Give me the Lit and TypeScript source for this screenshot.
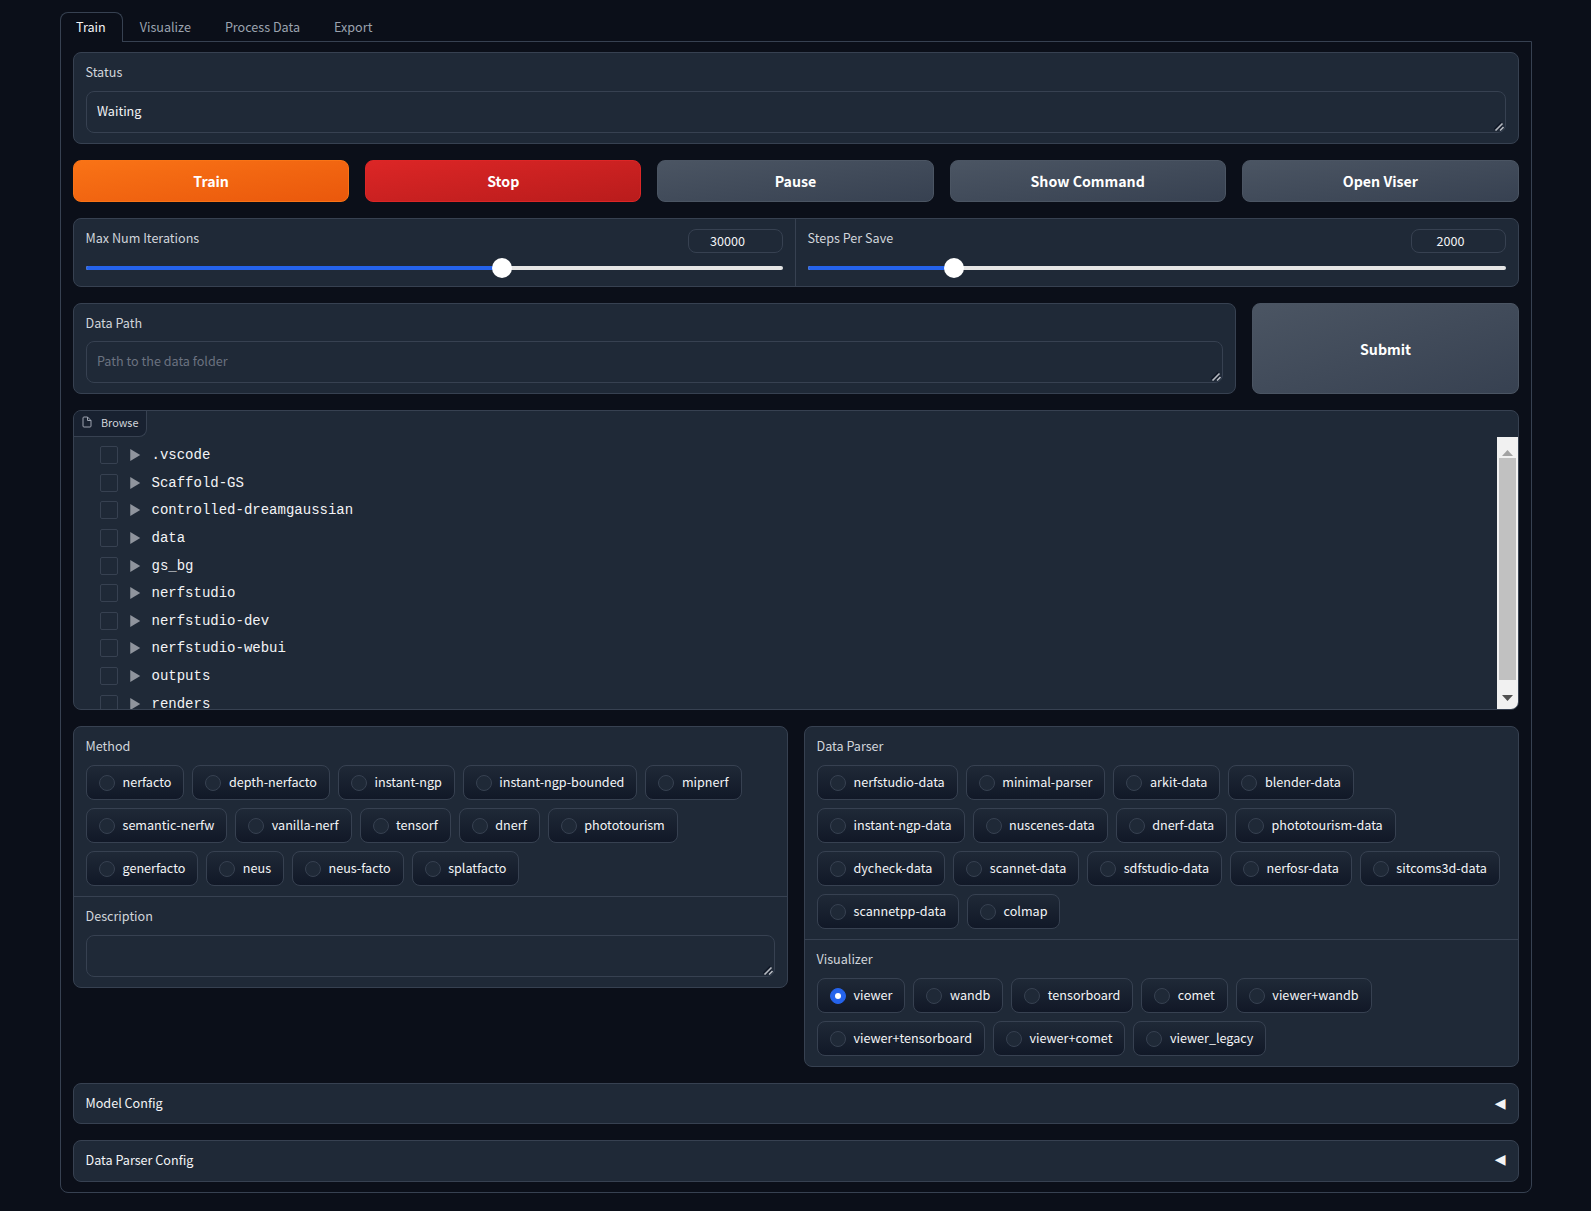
import { LitElement, html, css } from "lit";
import { customElement } from "lit/decorators.js";

const METHODS = ["nerfacto","depth-nerfacto","instant-ngp","instant-ngp-bounded","mipnerf","semantic-nerfw","vanilla-nerf","tensorf","dnerf","phototourism","generfacto","neus","neus-facto","splatfacto"];
const PARSERS = ["nerfstudio-data","minimal-parser","arkit-data","blender-data","instant-ngp-data","nuscenes-data","dnerf-data","phototourism-data","dycheck-data","scannet-data","sdfstudio-data","nerfosr-data","sitcoms3d-data","scannetpp-data","colmap"];
const VIS = ["viewer","wandb","tensorboard","comet","viewer+wandb","viewer+tensorboard","viewer+comet","viewer_legacy"];
const FILES = [".vscode","Scaffold-GS","controlled-dreamgaussian","data","gs_bg","nerfstudio","nerfstudio-dev","nerfstudio-webui","outputs","renders"];

@customElement("app-root")
export class AppRoot extends LitElement {
  static styles = css`
    :host { display:block; min-height:100vh; box-sizing:border-box; background:#0b0f19; padding:12px 59px 0 60px; font-family:"Noto Sans CJK SC","Noto Sans",sans-serif; font-size:12.6px; color:#f3f4f6; }
    * { box-sizing:border-box; }
    .tabs { display:flex; height:30px; }
    .tab { padding:0 16px; border:1px solid transparent; border-bottom:none; height:30px; line-height:28px; color:#9ca3af; }
    .tab.on { padding-left:15px; color:#f3f4f6; border-color:#374151; border-radius:8px 8px 0 0; background:#0b0f19; position:relative; z-index:1; }
    .panel { border:1px solid #374151; border-radius:0 0 8px 8px; margin-top:-1px; padding:10px 12px; display:flex; flex-direction:column; gap:16px; height:1152px; }
    .block { background:#1f2937; border:1px solid #374151; border-radius:8px; overflow:hidden; }
    .sec { padding:10px 12px; }
    .sec + .sec { border-top:1px solid #374151; }
    .lab { display:block; height:20px; line-height:18px; margin-bottom:8px; margin-left:-0.5px; color:#d1d5db; }
    .ta { position:relative; }
    textarea { display:block; width:100%; height:42px; background:#1f2937; border:1px solid #374151; border-radius:8px; padding:8px 10px; font:inherit; line-height:21px; color:#f3f4f6; outline:none; resize:none; }
    textarea::placeholder { color:#6b7280; }
    .grip { position:absolute; right:2px; bottom:2px; }
    .btns { display:grid; grid-template-columns:repeat(4,276.2px) 1fr; gap:16px; }
    .btn { height:42px; border-radius:8px; display:flex; align-items:center; justify-content:center; font-size:14.2px; font-weight:700; color:#fff; border:1px solid #4b5563; background:linear-gradient(to bottom right,#4b5563,#374151); }
    .btn.pri { background:linear-gradient(to bottom right,#f97316,#ea580c); border-color:#f97316; }
    .btn.stop { background:linear-gradient(to bottom right,#dc2626,#b91c1c); border-color:#dc2626; }
    .sliders { display:grid; grid-template-columns:721px 1fr; height:69px; }
    .sl { padding:10px 12px 8px; }
    .sl + .sl { border-left:1px solid #374151; }
    .sl-h { display:flex; justify-content:space-between; align-items:flex-start; height:29px; }
    .sl-h span { line-height:18px; margin-left:-0.5px; color:#d1d5db; }
    .num { width:95px; height:24px; border:1px solid #374151; border-radius:8px; text-align:center; padding-right:16px; line-height:22px; color:#f3f4f6; }
    .track { height:4px; border-radius:2px; background:#e5e5e5; position:relative; margin-top:8px; }
    .fill { position:absolute; left:0; top:0; bottom:0; background:#2563eb; border-radius:2px; }
    .thumb { position:absolute; top:-8px; width:20px; height:20px; margin-left:-10px; border-radius:50%; background:#fff; }
    .dp { display:grid; grid-template-columns:1fr 267px; gap:16px; }
    .dp .btn { height:auto; }
    .dp .lab { margin-bottom:7px; }
    .browse { height:300px; display:flex; flex-direction:column; position:relative; }
    .bl { align-self:flex-start; height:26px; width:73px; display:flex; align-items:center; gap:8px; padding:0 0 3px 7px; font-size:10.8px; color:#d1d5db; background:#182130; border-right:1px solid #374151; border-bottom:1px solid #374151; border-radius:0 0 8px 0; flex:none; }
    .tree { flex:1; overflow:hidden; padding:4.4px 0 0 26px; }
    .row { height:27.6px; display:flex; align-items:center; font-size:14px; font-family:"Liberation Mono","DejaVu Sans Mono",monospace; color:#f3f4f6; }
    .cb { width:18px; height:18px; border:1px solid #374151; border-radius:2px; flex:none; margin-right:12px; }
    .row svg { flex:none; margin-right:11.5px; }
    .sb { position:absolute; right:0; top:26px; bottom:0; width:21px; background:#f1f1f1; }
    .sb i { position:absolute; left:2px; right:2px; top:21px; height:222px; background:#c1c1c1; }
    .sb svg { position:absolute; left:5px; }
    .two { display:grid; grid-template-columns:1fr 1fr; gap:16px; align-items:start; }
    .chips { display:flex; flex-wrap:wrap; gap:8px; }
    .chip { height:35px; display:flex; align-items:center; gap:8px; padding:0 11.5px 0 12px; border:1px solid #374151; border-radius:8px; background:linear-gradient(to top,#111827,#1f2937); color:#f3f4f6; white-space:nowrap; }
    .chip em { font-style:normal; margin:-2px 0.5px 0 -0.5px; }
    .radio { width:16px; height:16px; border-radius:50%; border:1px solid #374151; background:#1f2937; flex:none; }
    .radio.on { background:#2563eb; border-color:#2563eb; position:relative; }
    .radio.on::after { content:""; position:absolute; left:4px; top:4px; width:6px; height:6px; border-radius:50%; background:#fff; }
    .acc { height:41px; display:flex; align-items:center; justify-content:space-between; padding:0 12px 2px 11.5px; color:#f3f4f6; }
    .acc.tall { height:42px; padding-bottom:4px; }
    .acc b { font-weight:400; font-family:"DejaVu Sans",sans-serif; font-size:14px; margin-right:0.5px; }
  `;

  private chips(items: string[], sel?: string) {
    return html`<div class="chips">${items.map(t => html`<label class="chip"><span class="radio ${t === sel ? "on" : ""}"></span><em>${t}</em></label>`)}</div>`;
  }

  private slider(label: string, val: string, pct: number) {
    return html`<div class="sl">
      <div class="sl-h"><span>${label}</span><div class="num">${val}</div></div>
      <div class="track"><div class="fill" style="width:${pct}%"></div><div class="thumb" style="left:${pct}%"></div></div>
    </div>`;
  }

  private ta(value: string, placeholder = "") {
    return html`<div class="ta"><textarea .value=${value} placeholder=${placeholder}></textarea>
      <svg class="grip" width="10" height="10" viewBox="0 0 10 10" fill="none"><path d="M0.5 8.5L7.5 1.5M5 9L8.5 5.5" stroke="#111827" stroke-width="2"/><path d="M1.5 9.5L8.5 2.5M6 9.5L9.5 6" stroke="#b4b8bf" stroke-width="1.6"/></svg></div>`;
  }

  render() {
    return html`
      <div class="tabs">
        <div class="tab on">Train</div><div class="tab">Visualize</div><div class="tab">Process Data</div><div class="tab">Export</div>
      </div>
      <div class="panel">
        <div class="block"><div class="sec"><span class="lab">Status</span>${this.ta("Waiting")}</div></div>
        <div class="btns">
          <div class="btn pri">Train</div><div class="btn stop">Stop</div><div class="btn">Pause</div><div class="btn">Show Command</div><div class="btn">Open Viser</div>
        </div>
        <div class="block sliders">
          ${this.slider("Max Num Iterations", "30000", 59.7)}
          ${this.slider("Steps Per Save", "2000", 20.9)}
        </div>
        <div class="dp">
          <div class="block"><div class="sec"><span class="lab">Data Path</span>${this.ta("", "Path to the data folder")}</div></div>
          <div class="btn">Submit</div>
        </div>
        <div class="block browse">
          <div class="bl"><svg width="12" height="12" viewBox="0 0 24 24" fill="none" stroke="#9ca3af" stroke-width="2"><path d="M13 2H6a2 2 0 0 0-2 2v16a2 2 0 0 0 2 2h12a2 2 0 0 0 2-2V9z"/><path d="M13 2v7h7"/></svg>Browse</div>
          <div class="tree">
            ${FILES.map(f => html`<div class="row"><span class="cb"></span><svg width="10.5" height="12" viewBox="0 0 10 12" style="margin-right:11px"><path d="M0 0L10 6L0 12Z" fill="#8f949d"/></svg>${f}</div>`)}
          </div>
          <div class="sb">
            <svg style="top:13px" width="11" height="6" viewBox="0 0 11 6"><path d="M5.5 0L11 6H0Z" fill="#a3a3a3"/></svg>
            <i></i>
            <svg style="bottom:8px" width="11" height="6" viewBox="0 0 11 6"><path d="M0 0H11L5.5 6Z" fill="#505050"/></svg>
          </div>
        </div>
        <div class="two">
          <div class="block">
            <div class="sec"><span class="lab">Method</span>${this.chips(METHODS)}</div>
            <div class="sec"><span class="lab">Description</span>${this.ta("")}</div>
          </div>
          <div class="block">
            <div class="sec"><span class="lab">Data Parser</span>${this.chips(PARSERS)}</div>
            <div class="sec"><span class="lab">Visualizer</span>${this.chips(VIS, "viewer")}</div>
          </div>
        </div>
        <div class="block acc"><span>Model Config</span><b>◀</b></div>
        <div class="block acc tall"><span>Data Parser Config</span><b>◀</b></div>
      </div>
    `;
  }
}
